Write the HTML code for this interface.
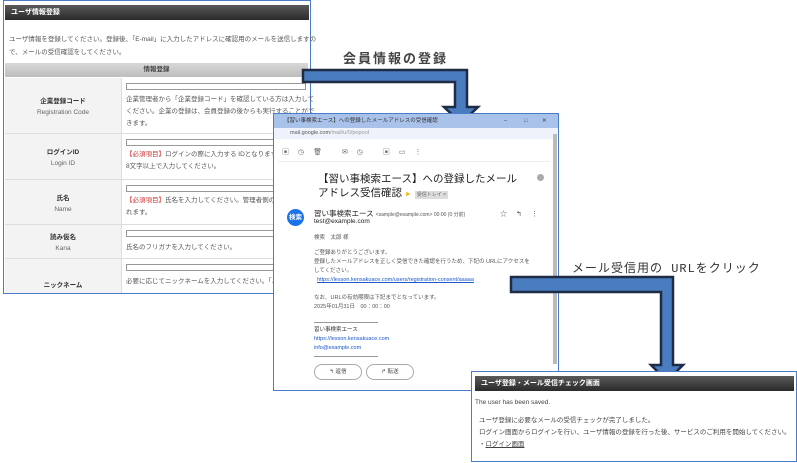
<!DOCTYPE html>
<html><head><meta charset="utf-8"><style>
*{margin:0;padding:0;box-sizing:border-box}
body{width:797px;height:463px;background:#fff;position:relative;overflow:hidden;font-family:"Liberation Sans","Noto Sans CJK JP",sans-serif;color:#333}
.a{position:absolute}
.hdr{background:linear-gradient(#5a5a5a,#2a2a2a);color:#fff;font-size:7px;font-weight:bold;padding-left:6px;line-height:15px}
.t{font-size:6.5px;color:#555;white-space:nowrap}
.row{position:absolute;left:5px;width:303px;border-bottom:1px solid #ddd}
.lab{position:absolute;left:0;top:0;bottom:0;width:117px;background:#f3f3f3;border-right:1px solid #ddd;text-align:center;font-size:6.5px;color:#333;font-weight:bold}
.lab span{display:block;font-weight:normal;color:#666}
.inp{position:absolute;left:121px;width:180px;height:7px;border:1px solid #999;background:#fff}
.red{color:#c33}
</style></head><body>
<!-- panel 1 -->
<div class="a" style="left:3px;top:0;width:308px;height:294px;border:1px solid #4a7cc8;background:#fff"></div>
<div class="a hdr" style="left:5px;top:5px;width:304px;height:15px">ユーザ情報登録</div>
<div class="a t" style="left:9px;top:33px;line-height:13px">ユーザ情報を登録してください。登録後、「E-mail」に入力したアドレスに確認用のメールを送信しますの<br>で、メールの受信確認をしてください。</div>
<div class="a" style="left:5px;top:63px;width:303px;height:14px;background:linear-gradient(#d8d8d8,#bdbdbd);font-size:6.5px;font-weight:bold;text-align:center;line-height:14px;color:#444">情報登録</div>
<div class="row" style="top:78px;height:56px"><div class="lab" style="padding-top:17px">企業登録コード<span style="margin-top:4px">Registration Code</span></div><div class="inp" style="top:5px"></div><div class="a t" style="left:121px;top:16px;line-height:12px">企業管理者から「企業登録コード」を確認している方は入力して<br>ください。企業の登録は、会員登録の後からも実行することがで<br>きます。</div></div>
<div class="row" style="top:134px;height:46px"><div class="lab" style="padding-top:12px">ログインID<span style="margin-top:4px">Login ID</span></div><div class="inp" style="top:5px"></div><div class="a t" style="left:121px;top:15px;line-height:12px"><span class="red">【必須項目】</span>ログインの際に入力する IDとなります。<br>8文字以上で入力してください。</div></div>
<div class="row" style="top:180px;height:45px"><div class="lab" style="padding-top:12px">氏名<span style="margin-top:4px">Name</span></div><div class="inp" style="top:5px"></div><div class="a t" style="left:121px;top:15px;line-height:12px"><span class="red">【必須項目】</span>氏名を入力してください。管理者側の画<br>れます。</div></div>
<div class="row" style="top:225px;height:34px"><div class="lab" style="padding-top:6px">読み仮名<span style="margin-top:4px">Kana</span></div><div class="inp" style="top:5px"></div><div class="a t" style="left:121px;top:16px">氏名のフリガナを入力してください。</div></div>
<div class="row" style="top:259px;height:34px;border:none"><div class="lab" style="padding-top:20px">ニックネーム</div><div class="inp" style="top:5px"></div><div class="a t" style="left:121px;top:16px">必要に応じてニックネームを入力してください。「ニ</div></div>

<!-- label 1 -->
<div class="a" style="left:343px;top:48px;font-size:13px;letter-spacing:2px;color:#444;font-weight:bold">会員情報の登録</div>
<!-- arrow 1 -->
<svg class="a" style="left:300px;top:66px" width="190" height="60"><path d="M3 4H167V41H178L161 57L144 41H155V16H3Z" fill="#4a7cc0" stroke="#1e2d45" stroke-width="2.5"/></svg>

<!-- gmail panel -->
<div class="a" style="left:273px;top:113px;width:286px;height:278px;border:1px solid #4a7cc8;background:#fff;overflow:hidden">
 <div class="a" style="left:0;top:0;width:286px;height:14px;background:#a9c2ea;font-size:5.5px;line-height:14px;padding-left:10px;color:#333">【習い事検索エース】への登録したメールアドレスの受信確認<span style="position:absolute;left:230px">–</span><span style="position:absolute;left:250px">□</span><span style="position:absolute;left:268px">✕</span></div>
 <div class="a" style="left:0;top:14px;width:286px;height:11px;background:#eef3fb;font-size:5.5px;line-height:11px;padding-left:16px;color:#555">mail.google.com<span style="color:#999">/mail/u/0/popout</span></div>
 <div class="a" style="left:8px;top:33px;font-size:7px;color:#666;letter-spacing:9px">▣◷🗑 ✉◷ ▣▭⋮</div>
 <div class="a" style="left:4px;top:47px;width:272px;border-top:1px solid #eee"></div>
 <div class="a" style="left:44px;top:58px;font-size:10.5px;line-height:14px;color:#222">【習い事検索エース】への登録したメール<br>アドレス受信確認 <span style="color:#f5b400;font-size:7px">►</span> <span style="font-size:5px;background:#ddd;color:#666;padding:1px 2px">受信トレイ ×</span></div>
 <div class="a" style="left:263px;top:60px;width:7px;height:7px;border-radius:50%;background:#aaa"></div>
 <div class="a" style="left:13px;top:95px;width:17px;height:17px;border-radius:50%;background:#1a73e8;color:#fff;font-size:6.5px;font-weight:bold;text-align:center;line-height:17px">検索</div>
 <div class="a" style="left:40px;top:94px;font-size:7.5px;color:#222;white-space:nowrap">習い事検索エース <span style="font-size:5px;color:#555">&lt;sample@example.com&gt; 00:00 (0 分前)</span></div>
 <div class="a" style="left:40px;top:104px;font-size:6.5px;color:#222">test@example.com</div>
 <div class="a" style="left:226px;top:95px;font-size:7px;color:#555;letter-spacing:9px">☆↰⋮</div>
 <div class="a t" style="left:40px;top:119px;font-size:5.5px">検索　太郎 様</div>
 <div class="a t" style="left:40px;top:135px;font-size:5.5px;line-height:9px">ご登録ありがとうございます。<br>登録したメールアドレスを正しく受信できた確認を行うため、下記の URLにアクセスを<br>してください。<br>&nbsp;&nbsp;<span style="color:#1a57c8;text-decoration:underline">https://lesson.kensakuace.com/users/registration-consent/aaaaa</span></div>
 <div class="a t" style="left:40px;top:180px;font-size:5.5px;line-height:9px">なお、URLの有効期限は下記までとなっています。<br>2025年01月31日　00：00：00</div>
 <div class="a" style="left:40px;top:208px;width:64px;border-top:1px solid #999"></div>
 <div class="a t" style="left:40px;top:212px;font-size:5.5px;line-height:9px;color:#333">習い事検索エース<br><span style="color:#1a57c8">https://lesson.kensakuace.com</span><br><span style="color:#1a57c8">info@example.com</span></div>
 <div class="a" style="left:40px;top:242px;width:64px;border-top:1px solid #999"></div>
 <div class="a" style="left:40px;top:250px;width:48px;height:16px;border:1px solid #aaa;border-radius:8px;font-size:5.5px;text-align:center;line-height:14px;color:#444">↰ 返信</div>
 <div class="a" style="left:92px;top:250px;width:48px;height:16px;border:1px solid #aaa;border-radius:8px;font-size:5.5px;text-align:center;line-height:14px;color:#444">↱ 転送</div>
 <div class="a" style="left:279px;top:20px;width:4px;height:230px;background:#bbb"></div>
</div>

<!-- label 2 -->
<div class="a" style="left:572px;top:259px;font-size:12px;letter-spacing:1px;color:#333;font-family:'Liberation Mono','Noto Sans CJK JP',monospace">メール受信用の URLをクリック</div>
<!-- arrow 2 -->
<svg class="a" style="left:508px;top:274px" width="190" height="112"><path d="M3 3H165V91H175L159 107L143 91H153V18H3Z" fill="#4a7cc0" stroke="#1e2d45" stroke-width="2.5"/></svg>

<!-- panel 3 -->
<div class="a" style="left:471px;top:371px;width:326px;height:91px;border:1px solid #4a7cc8;background:#fff">
 <div class="a hdr" style="left:3px;top:4px;width:319px;height:15px">ユーザ登録・メール受信チェック画面</div>
 <div class="a t" style="left:3px;top:27px;font-size:6.5px;color:#444">The user has been saved.</div>
 <div class="a t" style="left:7px;top:43px;font-size:6.5px;line-height:12px;color:#444">ユーザ登録に必要なメールの受信チェックが完了しました。<br>ログイン画面からログインを行い、ユーザ情報の登録を行った後、サービスのご利用を開始してください。<br>・<span style="text-decoration:underline">ログイン画面</span></div>
</div>
</body></html>
